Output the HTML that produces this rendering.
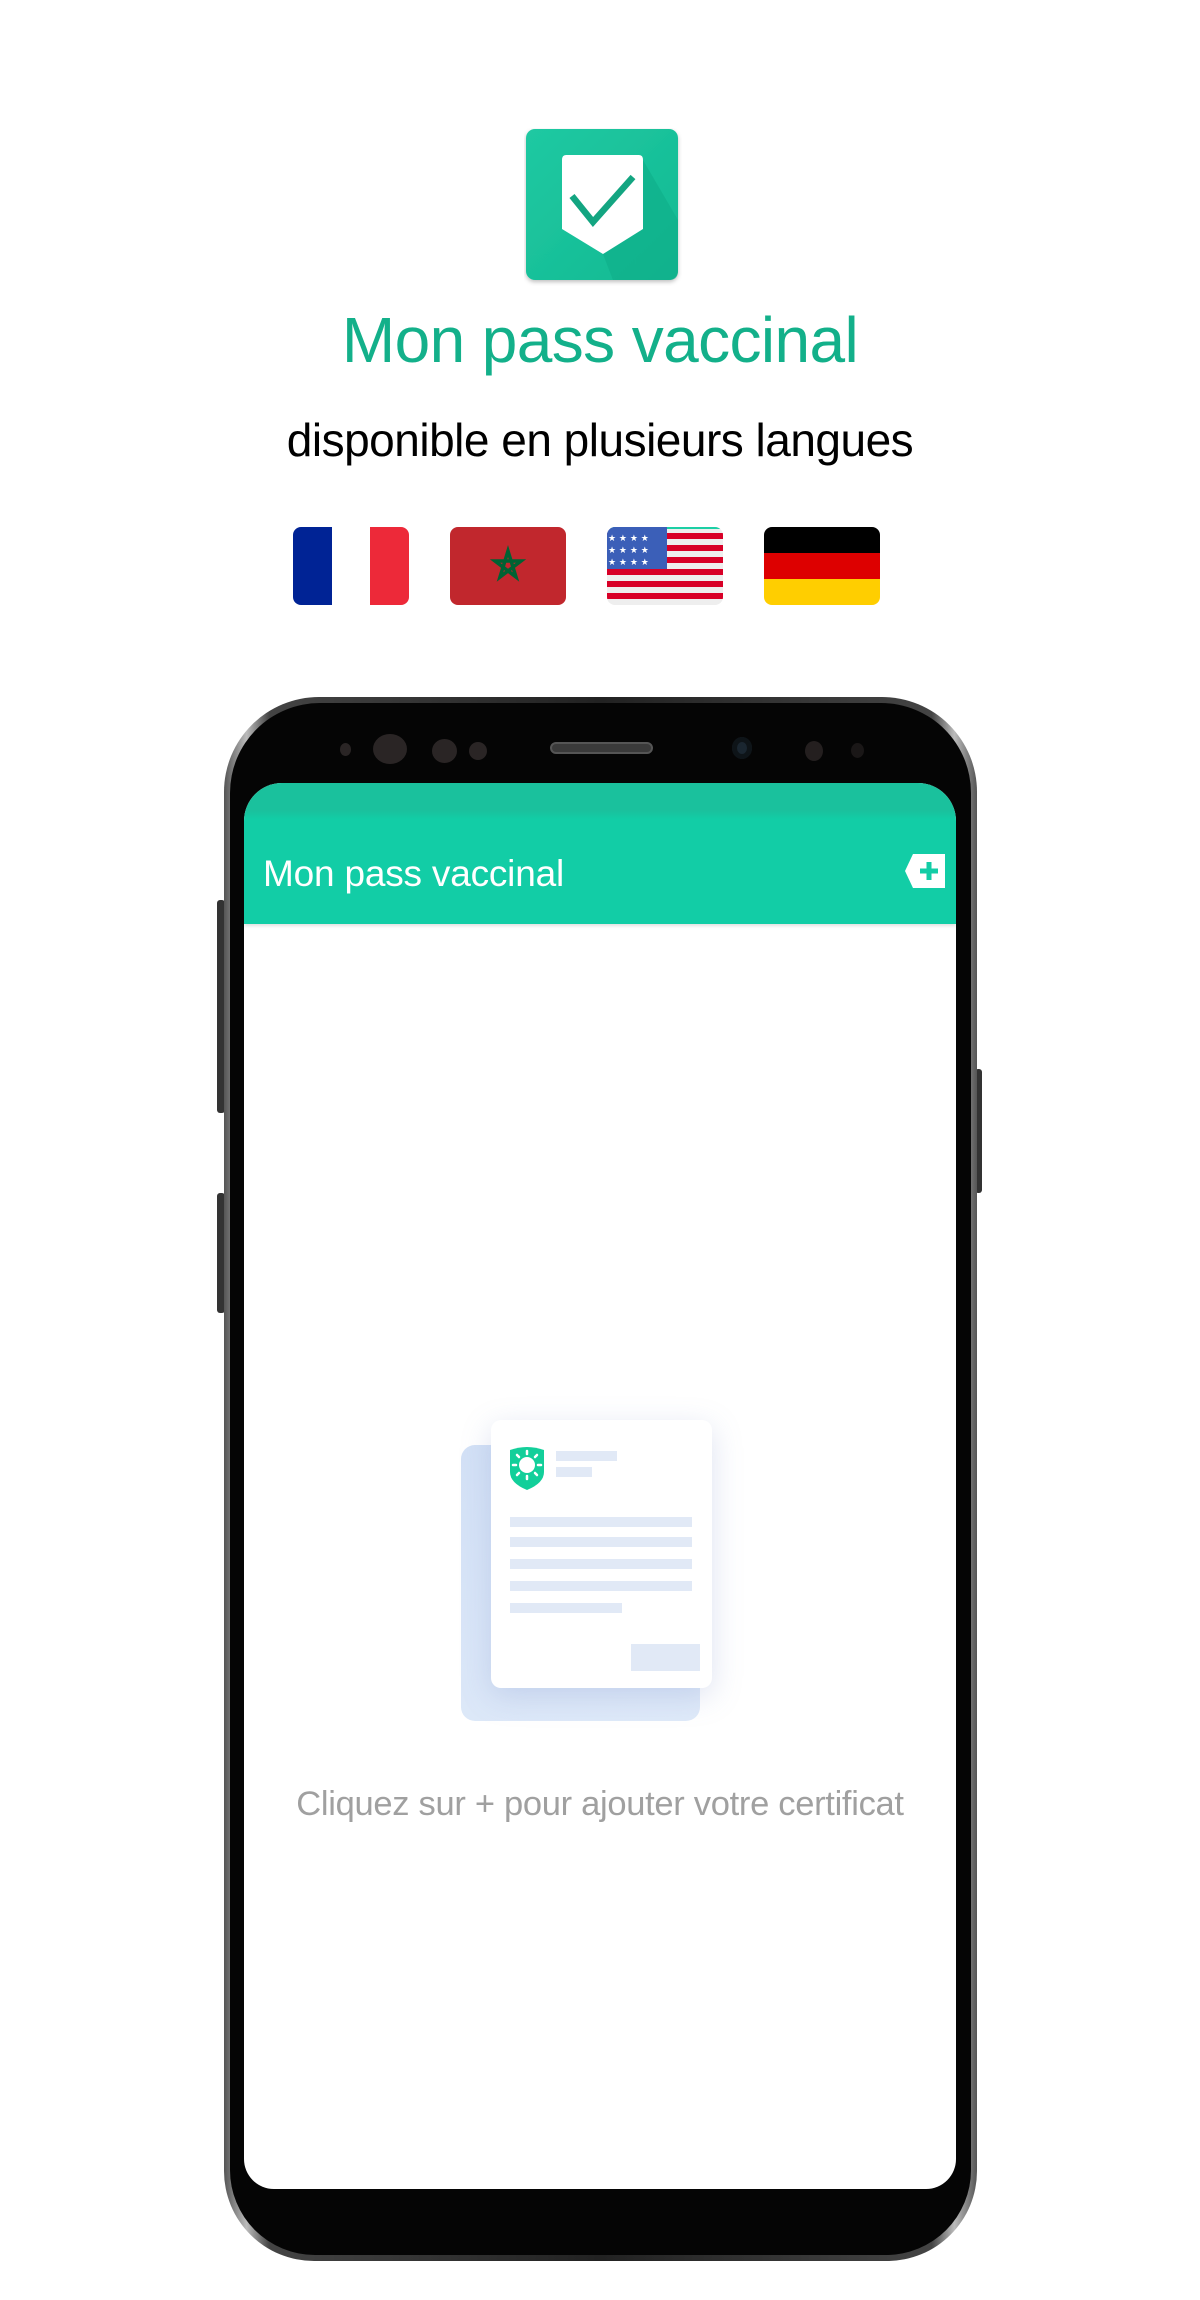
<!DOCTYPE html>
<html><head><meta charset="utf-8"><style>
*{margin:0;padding:0;box-sizing:border-box}
body{width:1200px;height:2300px;background:#fff;position:relative;overflow:hidden;font-family:"Liberation Sans",sans-serif}
.a{position:absolute}
</style></head><body>
<!-- logo -->
<svg class="a" style="left:524px;top:128px" width="158" height="158" viewBox="524 128 158 158">
<defs><linearGradient id="g" x1="0" y1="0" x2="1" y2="1"><stop offset="0" stop-color="#20c9a2"/><stop offset="1" stop-color="#12b992"/></linearGradient>
<filter id="s"><feDropShadow dx="0" dy="2" stdDeviation="2" flood-opacity=".25"/></filter></defs>
<rect x="526" y="129" width="152" height="151" rx="9" fill="url(#g)" filter="url(#s)"/>
<path d="M643 160 L678 220 L678 271 Q678 280 669 280 L613 280 L603 254 Z" fill="#0fae88" opacity=".6"/>
<path d="M566 155 H639 Q643 155 643 160 V229 L603 254 L562 229 V160 Q562 155 566 155 Z" fill="#fff"/>
<path d="M572 196 L593 222 L633 177" fill="none" stroke="#13a581" stroke-width="6.5"/>
</svg>
<div class="a" style="left:0;width:1200px;top:300px;text-align:center;color:#13b08a;font-size:64px;line-height:80px;letter-spacing:-0.6px">Mon pass vaccinal</div>
<div class="a" style="left:0;width:1200px;top:410px;text-align:center;color:#000;font-size:46px;line-height:60px;letter-spacing:-0.5px">disponible en plusieurs langues</div>
<!-- flags -->
<div class="a" style="left:293px;top:527px;width:116px;height:78px;border-radius:8px;overflow:hidden;display:flex"><div style="flex:1;background:#002395"></div><div style="flex:1;background:#fff"></div><div style="flex:1;background:#ed2939"></div></div>
<svg class="a" style="left:450px;top:527px" width="116" height="78" viewBox="0 0 116 78"><rect width="116" height="78" rx="8" fill="#c1272d"/><path d="M58 24 L66 50 L45 34 L71 34 L50 50 Z" fill="none" stroke="#006233" stroke-width="3.5" stroke-linejoin="miter"/></svg>
<svg class="a" style="left:607px;top:527px;border-radius:8px" width="116" height="78" viewBox="0 0 116 78">
<rect width="116" height="78" fill="#eee"/>
<g fill="#d80027"><rect y="6" width="116" height="6"/><rect y="18" width="116" height="6"/><rect y="30" width="116" height="6"/><rect y="42" width="116" height="6"/><rect y="54" width="116" height="6"/><rect y="66" width="116" height="6"/></g>
<rect width="116" height="2" fill="#1ccfa5"/>
<rect width="60" height="42" fill="#3b5fb8"/>
<g fill="#fff" font-size="9" font-family="DejaVu Sans"><text x="1" y="14">★ ★ ★ ★</text><text x="1" y="26">★ ★ ★ ★</text><text x="1" y="38">★ ★ ★ ★</text></g>
</svg>
<div class="a" style="left:764px;top:527px;width:116px;height:78px;border-radius:8px;overflow:hidden;display:flex;flex-direction:column"><div style="flex:1;background:#000"></div><div style="flex:1;background:#dd0000"></div><div style="flex:1;background:#ffce00"></div></div>
<!-- phone buttons -->
<div class="a" style="left:217px;top:900px;width:8px;height:213px;background:#333;border-radius:3px"></div>
<div class="a" style="left:217px;top:1193px;width:8px;height:120px;background:#333;border-radius:3px"></div>
<div class="a" style="left:975px;top:1069px;width:7px;height:124px;background:#333;border-radius:3px"></div>
<!-- phone frame -->
<div class="a" style="left:224px;top:697px;width:753px;height:1564px;border-radius:95px 95px 90px 90px;background:linear-gradient(90deg,#555,#bbb 3%,#444 6%,#222 50%,#444 94%,#bbb 97%,#555);"></div>
<div class="a" style="left:230px;top:703px;width:741px;height:1552px;border-radius:90px 90px 85px 85px;background:#050505"></div>
<!-- sensors -->
<div class="a" style="left:340px;top:743px;width:11px;height:13px;border-radius:50%;background:#2a2525"></div>
<div class="a" style="left:373px;top:734px;width:34px;height:30px;border-radius:50%;background:#2a2525"></div>
<div class="a" style="left:432px;top:739px;width:25px;height:24px;border-radius:50%;background:#2a2525"></div>
<div class="a" style="left:469px;top:742px;width:18px;height:18px;border-radius:50%;background:#2a2525"></div>
<div class="a" style="left:550px;top:742px;width:103px;height:12px;border-radius:6px;background:#3a3a3a;border:2px solid #555"></div>
<div class="a" style="left:732px;top:737px;width:20px;height:22px;border-radius:50%;background:#1a2630;box-shadow:inset 0 0 0 5px #0e1418"></div>
<div class="a" style="left:805px;top:741px;width:18px;height:20px;border-radius:50%;background:#241f1f"></div>
<div class="a" style="left:851px;top:743px;width:13px;height:15px;border-radius:50%;background:#1a1717"></div>
<!-- screen -->
<div class="a" style="left:244px;top:783px;width:712px;height:1406px;border-radius:38px 38px 30px 30px;background:#fff;overflow:hidden">
  <div style="height:141px;background:linear-gradient(#1ac19d 0,#1ac19d 28px,#12cda6 36px,#12cda6);position:relative;box-shadow:0 2px 3px rgba(0,0,0,.12)">
    <div class="a" style="left:19px;top:66px;color:#fff;font-size:37px;line-height:50px;letter-spacing:-0.2px">Mon pass vaccinal</div>
    <svg class="a" style="left:660px;top:70px" width="42" height="36" viewBox="0 0 42 36"><path d="M9 1 H41 V35 H9 L1 18 Z" fill="#fff"/><path d="M25 9 V27 M16 18 H34" stroke="#12cda6" stroke-width="5"/></svg>
  </div>
</div>
<!-- illustration -->
<div class="a" style="left:461px;top:1445px;width:239px;height:276px;border-radius:14px;background:linear-gradient(160deg,#d3e1f6,#dfeaf9);"></div>
<div class="a" style="left:491px;top:1420px;width:221px;height:268px;border-radius:10px;background:#fff;box-shadow:0 8px 30px rgba(120,140,200,.25)"></div>
<svg class="a" style="left:508px;top:1446px" width="38" height="45" viewBox="0 0 38 45"><path d="M2 4 Q19 -2 36 4 V26 Q36 37 19 44 Q2 37 2 26 Z" fill="#12cf9a"/><circle cx="19" cy="19" r="8" fill="#fff"/><g stroke="#fff" stroke-width="2.5" stroke-linecap="round"><path d="M19 5v3M19 30v3M5 19h3M30 19h3M9 9l2 2M27 27l2 2M29 9l-2 2M11 27l-2 2"/></g></svg>
<div class="a" style="left:556px;top:1451px;width:61px;height:10px;background:#e1e9f6"></div>
<div class="a" style="left:556px;top:1467px;width:36px;height:10px;background:#e1e9f6"></div>
<div class="a" style="left:510px;top:1517px;width:182px;height:10px;background:#e1e9f6"></div>
<div class="a" style="left:510px;top:1537px;width:182px;height:10px;background:#e1e9f6"></div>
<div class="a" style="left:510px;top:1559px;width:182px;height:10px;background:#e1e9f6"></div>
<div class="a" style="left:510px;top:1581px;width:182px;height:10px;background:#e1e9f6"></div>
<div class="a" style="left:510px;top:1603px;width:112px;height:10px;background:#e1e9f6"></div>
<div class="a" style="left:631px;top:1644px;width:69px;height:27px;background:#e1e9f6"></div>
<div class="a" style="left:0;width:1200px;top:1782px;text-align:center;color:#a0a0a0;font-size:34.5px;line-height:44px;letter-spacing:-0.3px">Cliquez sur + pour ajouter votre certificat</div>
</body></html>
